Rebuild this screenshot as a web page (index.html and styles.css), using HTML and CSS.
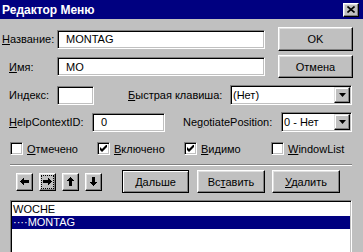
FILE: index.html
```html
<!DOCTYPE html>
<html>
<head>
    <meta charset="UTF-8">
    <title>Редактор Меню</title>
    <link rel="stylesheet" href="styles.css">
</head>
<body>
<div class="titlebar">
    <span class="title">Редактор Меню</span>
    <span class="close">
        <svg width="8" height="7" viewBox="0 0 8 7"><path d="M0.5 0.5 L7.5 6.5 M7.5 0.5 L0.5 6.5" stroke="#000" stroke-width="1.6"/></svg>
    </span>
</div>

<div class="row row-name">
    <span class="lbl lbl-name"><u>Н</u>азвание:</span>
    <div class="field field-wide">MONTAG</div>
    <div class="btn btn-side">OK</div>
</div>

<div class="row row-id">
    <span class="lbl lbl-id"><u>И</u>мя:</span>
    <div class="field field-wide">MO</div>
    <div class="btn btn-side btn-cancel">Отмена</div>
</div>

<div class="row row-index">
    <span class="lbl lbl-id">Индекс:</span>
    <div class="field field-index"></div>
    <span class="lbl lbl-key"><u>Б</u>ыстрая клавиша:</span>
    <div class="combo combo-key">
        <span class="combo-text">(Нет)</span>
        <span class="combo-btn"><svg width="7" height="4" viewBox="0 0 7 4"><polygon points="0,0 7,0 3.5,4" fill="#000"/></svg></span>
    </div>
</div>

<div class="row row-help">
    <span class="lbl lbl-help"><u>H</u>elpContextID:</span>
    <div class="field field-help">0</div>
    <span class="lbl lbl-nego">Ne<u>g</u>otiatePosition:</span>
    <div class="combo combo-nego">
        <span class="combo-text">0 - Нет</span>
        <span class="combo-btn"><svg width="7" height="4" viewBox="0 0 7 4"><polygon points="0,0 7,0 3.5,4" fill="#000"/></svg></span>
    </div>
</div>

<div class="row row-checks">
    <div class="check">
        <span class="box"></span>
        <span><u>О</u>тмечено</span>
    </div>
    <div class="check">
        <span class="box"><svg width="7" height="7" viewBox="0 0 7 7"><polygon points="0,2 2,4 7,-1 7,2 2,7 0,5" fill="#000"/></svg></span>
        <span><u>В</u>ключено</span>
    </div>
    <div class="check">
        <span class="box"><svg width="7" height="7" viewBox="0 0 7 7"><polygon points="0,2 2,4 7,-1 7,2 2,7 0,5" fill="#000"/></svg></span>
        <span><u>В</u>идимо</span>
    </div>
    <div class="check">
        <span class="box"></span>
        <span><u>W</u>indowList</span>
    </div>
</div>

<div class="separator"></div>

<div class="row row-tools">
    <div class="btn arrow">
        <svg class="arrow-icon" width="9" height="9" viewBox="0 0 9 9"><polygon points="0,4.5 4,0 4,3 9,3 9,6 4,6 4,9" fill="#000"/></svg>
    </div>
    <div class="btn arrow">
        <span class="focus">
            <svg class="arrow-icon" width="9" height="9" viewBox="0 0 9 9"><polygon points="9,4.5 5,0 5,3 0,3 0,6 5,6 5,9" fill="#000"/></svg>
        </span>
    </div>
    <div class="btn arrow">
        <svg class="arrow-icon" width="9" height="9" viewBox="0 0 9 9"><polygon points="4.5,0 9,4 6,4 6,9 3,9 3,4 0,4" fill="#000"/></svg>
    </div>
    <div class="btn arrow arrow-last">
        <svg class="arrow-icon" width="9" height="9" viewBox="0 0 9 9"><polygon points="4.5,9 9,5 6,5 6,0 3,0 3,5 0,5" fill="#000"/></svg>
    </div>
    <div class="btn btn-wide btn-default"><span><u>Д</u>альше</span></div>
    <div class="btn btn-wide btn-insert"><span>Вс<u>т</u>авить</span></div>
    <div class="btn btn-wide btn-delete"><span><u>У</u>далить</span></div>
</div>

<div class="list">
    <div class="item">WOCHE</div>
    <div class="item sel">····MONTAG</div>
</div>
</body>
</html>
```

FILE: styles.css
```css
* {
    box-sizing: border-box;
}

body {
    margin: 0;
    width: 363px;
    height: 252px;
    overflow: hidden;
    background: #c0c0c0;
    font-family: "Liberation Sans", Arial, sans-serif;
    font-size: 11px;
    color: #000;
}

u {
    text-decoration: underline;
    text-underline-offset: 1px;
}

/* title bar */
.titlebar {
    height: 19px;
    background: #000080;
    display: flex;
    align-items: center;
    justify-content: space-between;
    padding: 0 4px 0 2px;
}
.title {
    color: #fff;
    font-weight: bold;
    font-size: 12px;
}
.close {
    width: 16px;
    height: 14px;
    background: #c0c0c0;
    border: 1px solid;
    border-color: #fff #000 #000 #fff;
    box-shadow: inset -1px -1px #808080, inset 1px 1px #dfdfdf;
    display: flex;
    align-items: center;
    justify-content: center;
}

/* rows */
.row {
    display: flex;
    align-items: center;
}
.row-name {
    height: 24px;
    margin-top: 8px;
    padding-left: 2px;
}
.row-id {
    height: 23px;
    margin-top: 4px;
    padding-left: 9px;
}
.row-index {
    height: 20px;
    margin-top: 7px;
    padding-left: 9px;
}
.row-help {
    height: 20px;
    margin-top: 7px;
    padding-left: 9px;
}
.row-checks {
    height: 13px;
    margin-top: 10px;
    padding-left: 10px;
}
.row-tools {
    height: 23px;
    margin-top: 4px;
    padding-left: 16px;
}

.lbl {
    white-space: nowrap;
}
.lbl-name {
    width: 55px;
}
.lbl-id {
    width: 48px;
}
.lbl-key {
    margin-left: 34px;
    width: 102px;
}
.lbl-help {
    width: 83px;
}
.lbl-nego {
    margin-left: 18px;
    width: 98px;
}

/* sunken fields */
.field,
.combo,
.list,
.box {
    background: #fff;
    border: 1px solid;
    border-color: #808080 #fff #fff #808080;
    box-shadow: inset 1px 1px #000, inset -1px -1px #c0c0c0;
}
.field {
    height: 19px;
    display: flex;
    align-items: center;
    padding-left: 8px;
}
.field-wide {
    width: 208px;
}
.field-index {
    width: 37px;
}
.field-help {
    width: 73px;
}

.combo {
    height: 20px;
    display: flex;
    align-items: center;
    padding: 1px;
}
.combo-text {
    flex: 1;
    padding-left: 1px;
}
.combo-key {
    width: 122px;
}
.combo-nego {
    width: 71px;
}
.combo-btn {
    width: 16px;
    height: 16px;
    background: #c0c0c0;
    border: 1px solid;
    border-color: #dfdfdf #000 #000 #dfdfdf;
    box-shadow: inset -1px -1px #808080, inset 1px 1px #fff;
    display: flex;
    align-items: center;
    justify-content: center;
}

/* raised buttons */
.btn {
    display: flex;
    align-items: center;
    justify-content: center;
    background: #c0c0c0;
    border: 1px solid;
    border-color: #fff #000 #000 #fff;
    box-shadow: inset -1px -1px #808080, inset 1px 1px #dfdfdf;
}
.btn-side {
    margin-left: 13px;
    width: 75px;
    height: 24px;
}
.btn-cancel {
    height: 23px;
}

.arrow {
    width: 17px;
    height: 18px;
    margin-right: 6px;
}
.arrow-last {
    margin-right: 0;
}
.arrow-icon {
    shape-rendering: crispEdges;
}
.focus {
    width: 11px;
    height: 12px;
    outline: 1px dotted #000;
    display: flex;
    align-items: center;
    justify-content: center;
}

.btn-wide {
    height: 23px;
    width: 68px;
}
.btn-default {
    margin-left: 20px;
    width: 67px;
    border-color: #000;
    box-shadow: inset 1px 1px #fff, inset -1px -1px #808080;
}
.btn-insert {
    margin-left: 8px;
}
.btn-delete {
    margin-left: 7px;
}

/* checkboxes */
.check {
    width: 87px;
    display: flex;
    align-items: center;
    gap: 4px;
}
.box {
    width: 13px;
    height: 13px;
    display: flex;
    align-items: center;
    justify-content: center;
}

.separator {
    margin: 9px 11px 0 10px;
    height: 2px;
    border-top: 1px solid #808080;
    border-bottom: 1px solid #fff;
}

/* list */
.list {
    margin: 7px 11px 0 10px;
    height: 60px;
    padding: 1px;
}
.item {
    height: 13px;
    line-height: 13px;
    padding-left: 1px;
    white-space: nowrap;
}
.item:first-child {
    margin-top: 1px;
}
.item.sel {
    background: #000080;
    color: #fff;
}
```
